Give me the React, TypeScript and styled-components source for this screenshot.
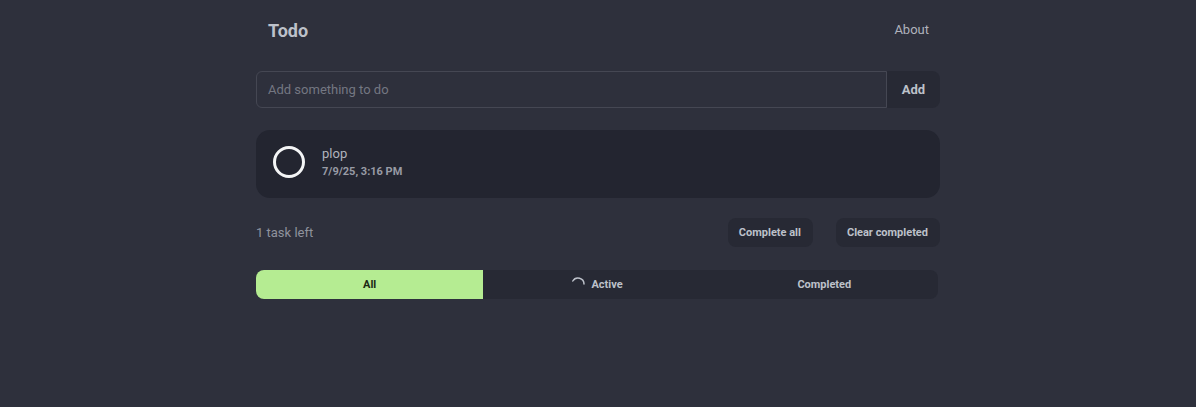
import styled, { createGlobalStyle } from "styled-components";

const GlobalStyle = createGlobalStyle`
  * { box-sizing: border-box; }
  html, body { margin: 0; padding: 0; background: #2e303c; }
  body { font-family: Roboto, "Liberation Sans", sans-serif; }
`;

const Page = styled.main`
  width: 684px;
  margin-left: 256px;
  min-height: 407px;
  display: flex;
  flex-direction: column;
`;

const Header = styled.header`
  height: 61px;
  padding: 0 11px 0 12px;
  display: flex;
  align-items: center;
  justify-content: space-between;
`;

const Title = styled.h1`
  margin: 0;
  font-size: 18px;
  font-weight: 700;
  color: #bdc1ca;
`;

const NavLink = styled.a`
  margin-bottom: 2px;
  font-size: 13px;
  color: #b0b3bc;
`;

const AddForm = styled.form`
  display: flex;
  height: 37px;
  margin: 10px 0 0;
`;

const TaskInput = styled.input`
  flex: 1;
  min-width: 0;
  padding: 0 11px;
  background: transparent;
  border: 1px solid #454753;
  border-radius: 6px 0 0 6px;
  font: 400 13px Roboto, sans-serif;
  color: #b0b3bc;
  &::placeholder { color: #747782; opacity: 1; }
`;

const AddButton = styled.button`
  width: 53px;
  border: 0;
  border-radius: 0 8px 8px 0;
  background: #272934;
  color: #bdc1ca;
  font: 700 13px Roboto, sans-serif;
`;

const TaskCard = styled.section`
  height: 68px;
  margin-top: 22px;
  padding: 0 17px 4px;
  display: flex;
  align-items: center;
  gap: 17px;
  background: #232530;
  border-radius: 14px;
`;

const Circle = styled.span`
  width: 32px;
  height: 32px;
  border: 3px solid #f4f5f6;
  border-radius: 50%;
`;

const TaskText = styled.div`
  display: flex;
  flex-direction: column;
  gap: 4px;
`;

const TaskName = styled.span`
  font-size: 13px;
  line-height: 15px;
  color: #b0b3bc;
`;

const TaskDate = styled.span`
  font-size: 11px;
  line-height: 13px;
  font-weight: 700;
  color: #989ba5;
`;

const Footer = styled.div`
  height: 29px;
  margin-top: 20px;
  display: flex;
  align-items: center;
`;

const Count = styled.span`
  margin-right: auto;
  font-size: 13px;
  color: #8f939e;
`;

const SmallButton = styled.button`
  height: 29px;
  padding: 0 12px 0 11px;
  margin-left: 23px;
  border: 0;
  border-radius: 8px;
  background: #272934;
  color: #bdc1ca;
  font: 700 11px Roboto, sans-serif;
`;

const Tabs = styled.nav`
  width: 682px;
  height: 29px;
  margin-top: 23px;
  display: grid;
  grid-template-columns: repeat(3, 1fr);
  background: #272934;
  border-radius: 8px;
  overflow: hidden;
`;

const Tab = styled.div<{ $active?: boolean }>`
  display: flex;
  align-items: center;
  justify-content: center;
  gap: 6px;
  font-size: 11px;
  font-weight: 700;
  background: ${(p) => (p.$active ? "#b5ec92" : "transparent")};
  color: ${(p) => (p.$active ? "#1c2a14" : "#bdc1ca")};
`;

const SpinnerIcon = styled.svg`
  margin-top: -1px;
`;

const Spinner = () => (
  <SpinnerIcon width="14" height="14" viewBox="0 0 14 14" fill="none">
    <path d="M1.8 4 A6 6 0 0 1 13 7" stroke="#bdc1ca" strokeWidth="1.5" strokeLinecap="round" />
  </SpinnerIcon>
);

export default function App() {
  return (
    <Page>
      <GlobalStyle />
      <Header>
        <Title>Todo</Title>
        <NavLink>About</NavLink>
      </Header>
      <AddForm>
        <TaskInput placeholder="Add something to do" />
        <AddButton type="button">Add</AddButton>
      </AddForm>
      <TaskCard>
        <Circle />
        <TaskText>
          <TaskName>plop</TaskName>
          <TaskDate>7/9/25, 3:16 PM</TaskDate>
        </TaskText>
      </TaskCard>
      <Footer>
        <Count>1 task left</Count>
        <SmallButton>Complete all</SmallButton>
        <SmallButton>Clear completed</SmallButton>
      </Footer>
      <Tabs>
        <Tab $active>All</Tab>
        <Tab>
          <Spinner />
          Active
        </Tab>
        <Tab>Completed</Tab>
      </Tabs>
    </Page>
  );
}
